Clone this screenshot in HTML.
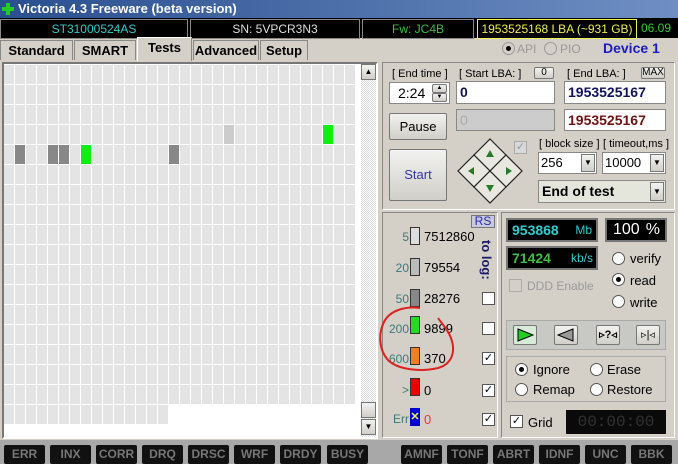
<!DOCTYPE html><html><head><style>
*{margin:0;padding:0;box-sizing:border-box}
body{width:678px;height:464px;background:#d4d0c8;font-family:"Liberation Sans",sans-serif;font-size:12px;position:relative;overflow:hidden}
.a{position:absolute}
.blk{background:#000;border:1px solid #888;font-size:12px;text-align:center;line-height:18px}
.tab{position:absolute;top:40px;height:20px;border:1px solid #888;border-bottom:none;font-size:13px;font-weight:bold;text-align:center;line-height:19px;background:#d4d0c8}
.btn{position:absolute;background:linear-gradient(#f2f2f0,#d0cfc9);border:1px solid #777;border-radius:2px;text-align:center}
.inp{position:absolute;background:#fff;border:1px solid #888;font-weight:bold;font-size:14px;padding-left:3px;line-height:20px}
.lbl{position:absolute;font-size:11px;color:#000}
.cell{position:absolute;width:10px;height:19px;background:#e4e4e4}
.st{position:absolute;top:445px;height:19px;background:#111;color:#777;font-weight:bold;font-size:12px;text-align:center;line-height:19px;border-radius:2px}
.rad{position:absolute;width:13px;height:13px;border-radius:50%;background:#fff;border:1px solid #555}
.rad.on::after{content:"";position:absolute;left:3px;top:3px;width:5px;height:5px;border-radius:50%;background:#000}
.cb{position:absolute;width:13px;height:13px;background:#fff;border:1px solid #555;font-size:11px;line-height:11px;text-align:center;color:#001}
.sw{position:absolute;width:10px;height:18px;border:1px solid #333}
.num{position:absolute;font-size:13px}
.lv{position:absolute;font-size:12px;color:#3a7a7a;text-align:right;width:30px}
</style></head><body>
<div class="a" style="left:0;top:0;width:678px;height:18px;background:linear-gradient(90deg,#2a4f8f,#6f8fc4);color:#fff;font-weight:bold;font-size:13px;line-height:18px;padding-left:18px">Victoria 4.3 Freeware (beta version)</div>
<div class="a" style="left:2px;top:3px;width:12px;height:12px"><div class="a" style="left:4px;top:0;width:4px;height:12px;background:#2c2"></div><div class="a" style="left:0;top:4px;width:12px;height:4px;background:#2c2"></div></div>
<div class="a" style="left:0;top:18px;width:678px;height:20px;background:#000"></div>
<div class="a blk" style="left:0;top:19px;width:188px;color:#3cc">ST31000524AS</div>
<div class="a blk" style="left:190px;top:19px;width:170px;color:#ddd">SN: 5VPCR3N3</div>
<div class="a blk" style="left:362px;top:19px;width:112px;color:#4b4">Fw: JC4B</div>
<div class="a blk" style="left:477px;top:19px;width:160px;color:#ee5;border-color:#ee5">1953525168 LBA (~931 GB)</div>
<div class="a" style="left:641px;top:19px;color:#3c3;line-height:18px">06.09</div>
<div class="tab" style="left:0;width:73px">Standard</div>
<div class="tab" style="left:74px;width:62px">SMART</div>
<div class="tab" style="left:137px;top:37px;height:24px;width:55px;background:#d4d0c8;border-color:#fff #888 transparent #fff">Tests</div>
<div class="tab" style="left:193px;width:66px">Advanced</div>
<div class="tab" style="left:260px;width:48px">Setup</div>
<div class="rad on" style="left:502px;top:42px;background:#d4d0c8;border-color:#999"></div><div class="lbl" style="left:517px;top:42px;color:#999;font-size:12px">API</div>
<div class="rad" style="left:544px;top:42px;background:#d4d0c8;border-color:#999"></div><div class="lbl" style="left:560px;top:42px;color:#999;font-size:12px">PIO</div>
<div class="a" style="left:603px;top:40px;color:#1a1ac8;font-weight:bold;font-size:14px">Device 1</div>
<div class="a" style="left:2px;top:62px;width:376px;height:377px;background:#fff;border:2px solid;border-color:#777 #fff #fff #777"></div>
<div id="g"></div>
<div class="a" style="left:361px;top:64px;width:15px;height:373px;background:repeating-conic-gradient(#ddd 0 25%,#fff 0 50%) 0 0/2px 2px"></div>
<div class="btn" style="left:361px;top:64px;width:15px;height:16px;font-size:8px;line-height:14px;border-radius:0">▲</div>
<div class="btn" style="left:361px;top:402px;width:15px;height:16px;border-radius:0"></div>
<div class="btn" style="left:361px;top:419px;width:15px;height:16px;font-size:8px;line-height:14px;border-radius:0">▼</div>
<div class="a" style="left:382px;top:62px;width:293px;height:148px;border:1px solid;border-color:#888 #fff #fff #888"></div>
<div class="lbl" style="left:392px;top:68px">[ End time ]</div>
<div class="lbl" style="left:459px;top:68px">[ Start LBA: ]</div>
<div class="btn" style="left:534px;top:67px;width:20px;height:12px;font-size:10px;line-height:10px">0</div>
<div class="lbl" style="left:567px;top:68px">[ End LBA: ]</div>
<div class="btn" style="left:641px;top:67px;width:24px;height:12px;font-size:10px;line-height:10px">MAX</div>
<div class="inp" style="left:389px;top:82px;width:61px;height:22px;font-weight:normal;font-size:14px;padding-left:8px">2:24</div>
<div class="btn" style="left:432px;top:84px;width:15px;height:9px;font-size:6px;line-height:7px">▲</div>
<div class="btn" style="left:432px;top:93px;width:15px;height:9px;font-size:6px;line-height:7px">▼</div>
<div class="inp" style="left:456px;top:81px;width:99px;height:23px;color:#12125a">0</div>
<div class="inp" style="left:564px;top:81px;width:102px;height:23px;color:#12125a">1953525167</div>
<div class="inp" style="left:456px;top:109px;width:99px;height:22px;background:#ccc;color:#aaa;font-weight:normal">0</div>
<div class="inp" style="left:564px;top:109px;width:102px;height:22px;color:#6a1515">1953525167</div>
<div class="btn" style="left:389px;top:113px;width:58px;height:27px;line-height:25px;font-size:13px">Pause</div>
<div class="btn" style="left:389px;top:149px;width:58px;height:52px;line-height:50px;font-size:13px;color:#3333aa">Start</div>
<svg class="a" style="left:456px;top:138px" width="68" height="66" viewBox="0 0 68 66">
<g stroke="#222" fill="#e8e8e0" stroke-width="1.2">
<polygon points="34,1 50,17 34,33 18,17"/><polygon points="18,17 34,33 18,49 2,33"/><polygon points="50,17 66,33 50,49 34,33"/><polygon points="34,33 50,49 34,65 18,49"/></g>
<g fill="#2a7a2a"><polygon points="34,12 38,19 30,19"/><polygon points="12,33 18,29 18,37"/><polygon points="56,33 50,29 50,37"/><polygon points="34,54 30,47 38,47"/></g></svg>
<div class="cb" style="left:514px;top:141px;background:#d8d8d8;border-color:#aaa;color:#999">✓</div>
<div class="lbl" style="left:539px;top:138px">[ block size ]</div>
<div class="lbl" style="left:603px;top:138px">[ timeout,ms ]</div>
<div class="inp" style="left:538px;top:152px;width:59px;height:22px;font-weight:normal;font-size:13px;padding-left:2px">256</div>
<div class="btn" style="left:581px;top:154px;width:14px;height:18px;font-size:8px;line-height:16px;border-radius:0">▼</div>
<div class="inp" style="left:602px;top:152px;width:64px;height:22px;font-weight:normal;font-size:13px;padding-left:2px">10000</div>
<div class="btn" style="left:650px;top:154px;width:14px;height:18px;font-size:8px;line-height:16px;border-radius:0">▼</div>
<div class="inp" style="left:538px;top:180px;width:128px;height:23px;background:#e4e6dc;font-size:14px">End of test</div>
<div class="btn" style="left:650px;top:182px;width:14px;height:19px;font-size:8px;line-height:17px;border-radius:0">▼</div>
<div class="a" style="left:382px;top:212px;width:116px;height:226px;border:1px solid;border-color:#888 #fff #fff #888"></div>
<div class="btn" style="left:471px;top:215px;width:24px;height:13px;background:#c8cbe0;color:#2a2aa0;font-size:12px;line-height:11px;border-radius:0">RS</div>
<div class="a" style="top:240px;transform:rotate(90deg);transform-origin:left top;color:#1a1a6a;font-weight:bold;font-size:13px;left:494px">to log:</div>
<div class="lv" style="left:379px;top:230px">5</div><div class="sw" style="left:410px;top:227px;background:#ddd"></div><div class="num" style="left:424px;top:229px">7512860</div>
<div class="lv" style="left:379px;top:261px">20</div><div class="sw" style="left:410px;top:258px;background:#bbb"></div><div class="num" style="left:424px;top:260px">79554</div>
<div class="lv" style="left:379px;top:292px">50</div><div class="sw" style="left:410px;top:289px;background:#888"></div><div class="num" style="left:424px;top:291px">28276</div>
<div class="lv" style="left:379px;top:322px">200</div><div class="sw" style="left:410px;top:316px;background:#2d2"></div><div class="num" style="left:424px;top:321px">9899</div>
<div class="lv" style="left:379px;top:352px">600</div><div class="sw" style="left:410px;top:347px;background:#f08020"></div><div class="num" style="left:424px;top:351px">370</div>
<div class="lv" style="left:379px;top:383px">&gt;</div><div class="sw" style="left:410px;top:378px;background:#e00"></div><div class="num" style="left:424px;top:383px">0</div>
<div class="lv" style="left:379px;top:412px">Err</div><div class="sw" style="left:410px;top:408px;background:#00c;border:none;color:#ee5;font-size:11px;line-height:18px;text-align:center;font-weight:bold">✕</div><div class="num" style="left:424px;top:412px;color:#e33">0</div>
<div class="cb" style="left:482px;top:292px"></div><div class="cb" style="left:482px;top:322px"></div>
<div class="cb" style="left:482px;top:352px">✓</div><div class="cb" style="left:482px;top:384px">✓</div><div class="cb" style="left:482px;top:413px">✓</div>
<svg class="a" style="left:376px;top:300px" width="84" height="76"><path d="M44,8 C30,6 14,10 8,22 C2,34 3,50 12,60 C22,70 45,72 62,68 C76,64 80,52 75,38 C71,28 66,24 62,18" stroke="#d22" stroke-width="2" fill="none"/></svg>
<div class="a" style="left:501px;top:212px;width:174px;height:226px;border:1px solid;border-color:#888 #fff #fff #888"></div>
<div class="a" style="left:506px;top:218px;width:92px;height:24px;background:#000;border:2px solid #777;color:#3cc;font-weight:bold;font-size:14px;line-height:20px;padding-left:4px">953868<span style="position:absolute;right:4px;font-weight:normal;font-size:12px">Mb</span></div>
<div class="a" style="left:605px;top:218px;width:62px;height:24px;background:#000;border:2px solid #777;color:#fff;font-size:16px;line-height:20px;padding-left:6px">100<span style="position:absolute;right:5px">%</span></div>
<div class="a" style="left:506px;top:246px;width:92px;height:24px;background:#000;border:2px solid #777;color:#4b4;font-weight:bold;font-size:14px;line-height:20px;padding-left:4px">71424<span style="position:absolute;right:3px;font-weight:normal;font-size:12px;color:#3cc">kb/s</span></div>
<div class="rad" style="left:612px;top:252px"></div><div class="num" style="left:630px;top:251px">verify</div>
<div class="rad on" style="left:612px;top:273px"></div><div class="num" style="left:630px;top:273px">read</div>
<div class="rad" style="left:612px;top:295px"></div><div class="num" style="left:630px;top:295px">write</div>
<div class="cb" style="left:509px;top:279px;background:#d4d0c8;border-color:#aaa"></div><div class="num" style="left:527px;top:279px;color:#999;font-size:12px">DDD Enable</div>
<div class="a" style="left:506px;top:320px;width:160px;height:30px;background:#c8c8c4;border:1px solid #aaa"></div>
<div class="btn" style="left:513px;top:325px;width:24px;height:20px;background:#d8ead8"><svg width="22" height="18"><polygon points="4,3 19,9 4,15" fill="#2c2" stroke="#000"/></svg></div>
<div class="btn" style="left:554px;top:325px;width:24px;height:20px"><svg width="22" height="18"><polygon points="18,3 3,9 18,15" fill="#999" stroke="#000"/></svg></div>
<div class="btn" style="left:596px;top:325px;width:24px;height:20px;font-size:11px;line-height:18px;font-weight:bold">▹?◃</div>
<div class="btn" style="left:636px;top:325px;width:24px;height:20px;font-size:11px;line-height:18px">▹|◃</div>
<div class="a" style="left:506px;top:356px;width:160px;height:46px;border:1px solid #aaa"></div>
<div class="rad on" style="left:515px;top:363px"></div><div class="num" style="left:533px;top:362px">Ignore</div>
<div class="rad" style="left:590px;top:363px"></div><div class="num" style="left:607px;top:362px">Erase</div>
<div class="rad" style="left:515px;top:383px"></div><div class="num" style="left:533px;top:382px">Remap</div>
<div class="rad" style="left:590px;top:383px"></div><div class="num" style="left:607px;top:382px">Restore</div>
<div class="cb" style="left:510px;top:415px">✓</div><div class="num" style="left:528px;top:415px">Grid</div>
<div class="a" style="left:566px;top:410px;width:100px;height:24px;background:#0a0a0a;color:#333;font-family:'Liberation Mono',monospace;font-size:16px;line-height:24px;text-align:center">00:00:00</div>
<div class="a" style="left:0;top:440px;width:678px;height:24px;background:#a8a8a8"></div>
<div id="s"></div>
<script>
var g='',i,j,c;
for(i=0;i<18;i++)for(j=0;j<32;j++){if(i==17&&j>14)continue;c='';
if(i==4&&(j==1||j==4||j==5||j==15))c='#888';if(i==4&&j==7)c='#1e1';if(i==3&&j==20)c='#ccc';if(i==3&&j==29)c='#1e1';
g+='<div class="cell" style="left:'+(4+11*j)+'px;top:'+(65+20*i)+'px'+(c?';background:'+c:'')+'"></div>';}
document.getElementById('g').innerHTML=g;
var L=[['ERR',4],['INX',50],['CORR',96],['DRQ',142],['DRSC',188],['WRF',234],['DRDY',280],['BUSY',327],['AMNF',401],['TONF',447],['ABRT',493],['IDNF',539],['UNC',585],['BBK',631]],s='';
L.forEach(function(a){s+='<div class="st" style="left:'+a[1]+'px;width:41px">'+a[0]+'</div>'});
document.getElementById('s').innerHTML=s;
</script>
</body></html>
